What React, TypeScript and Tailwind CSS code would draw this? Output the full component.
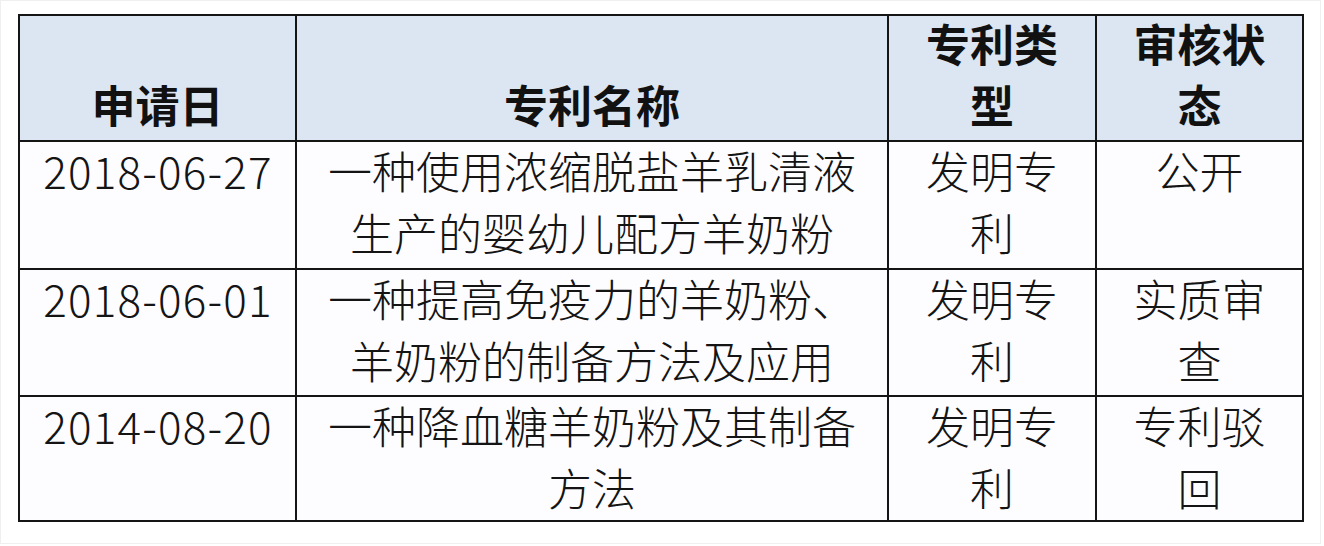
import React from "react";

const font = { fontFamily: '"Noto Sans CJK SC", "Noto Sans", sans-serif' };

type Row = { date: string; name: string[]; type: string[]; status: string[] };

const rows: Row[] = [
  {
    date: "2018-06-27",
    name: ["一种使用浓缩脱盐羊乳清液", "生产的婴幼儿配方羊奶粉"],
    type: ["发明专", "利"],
    status: ["公开"],
  },
  {
    date: "2018-06-01",
    name: ["一种提高免疫力的羊奶粉、", "羊奶粉的制备方法及应用"],
    type: ["发明专", "利"],
    status: ["实质审", "查"],
  },
  {
    date: "2014-08-20",
    name: ["一种降血糖羊奶粉及其制备", "方法"],
    type: ["发明专", "利"],
    status: ["专利驳", "回"],
  },
];

function HeadCell({ lines }: { lines: string[] }) {
  return (
    <div className="bg-[#dce6f3] flex flex-col items-center justify-end pb-[5px]">
      {lines.map((l, i) => (
        <div key={i} className="leading-[61px] text-[44px] font-bold text-[#111] whitespace-nowrap">
          {l}
        </div>
      ))}
    </div>
  );
}

function BodyCell({ lines, date }: { lines: string[]; date?: boolean }) {
  return (
    <div className="bg-[#fdfdff] flex flex-col items-center justify-start">
      <div className="-mt-[3px] flex flex-col items-center">
        {lines.map((l, i) => (
          <div
            key={i}
            className={
              date
                ? "leading-[62px] text-[44px] font-light text-[#141414] whitespace-nowrap tracking-[1.2px] pl-[1px]"
                : "leading-[62px] text-[44px] font-light text-[#141414] whitespace-nowrap"
            }
          >
            {l}
          </div>
        ))}
      </div>
    </div>
  );
}

export default function App() {
  return (
    <div className="w-[1324px] h-[546px] bg-white" style={font}>
      <div className="w-[1321px] h-[544px] border border-[#efefef] pt-[13px] pl-[17px]">
        <div className="grid grid-cols-[275px_590px_206px_205px] grid-rows-[124px_126px_125px_123px] gap-[2px] p-[2px] bg-[#151515] w-fit">
          <HeadCell lines={["申请日"]} />
          <HeadCell lines={["专利名称"]} />
          <HeadCell lines={["专利类", "型"]} />
          <HeadCell lines={["审核状", "态"]} />
          {rows.map((r) => (
            <React.Fragment key={r.date}>
              <BodyCell lines={[r.date]} date />
              <BodyCell lines={r.name} />
              <BodyCell lines={r.type} />
              <BodyCell lines={r.status} />
            </React.Fragment>
          ))}
        </div>
      </div>
    </div>
  );
}
